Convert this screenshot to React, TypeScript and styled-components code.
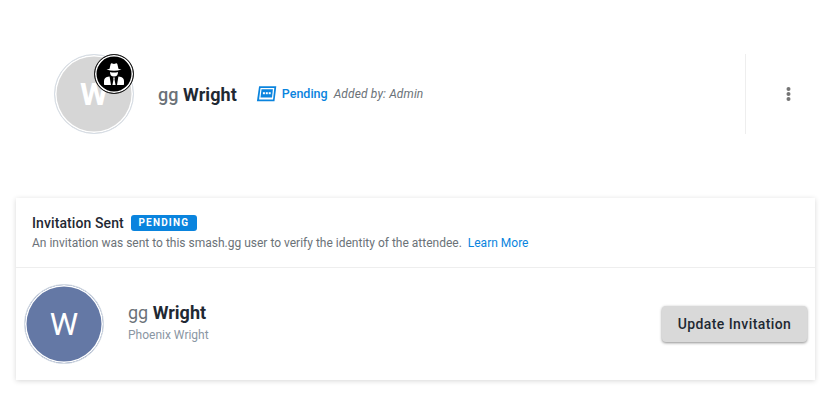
import React from "react";
import styled, { createGlobalStyle } from "styled-components";

const Global = createGlobalStyle`
  html, body { margin: 0; padding: 0; background: #fff; }
  body { font-family: Roboto, "Liberation Sans", sans-serif; color: #1f2933; }
`;

const Page = styled.div`
  width: 834px;
  height: 401px;
  padding: 54px 19px 0 16px;
  box-sizing: border-box;
  overflow: hidden;
`;

const Header = styled.header`
  height: 80px;
  display: flex;
  align-items: center;
  padding-left: 38px;
`;

const Avatar = styled.div<{ $bg: string; $weight: number }>`
  position: relative;
  width: 80px;
  height: 80px;
  flex: none;
  box-sizing: border-box;
  border-radius: 50%;
  border: 1px solid #d6dde5;
  box-shadow: inset 0 0 0 1.5px #fff;
  background: ${(p) => p.$bg};
  color: #fff;
  font-size: 32px;
  font-weight: ${(p) => p.$weight};
  display: flex;
  align-items: center;
  justify-content: center;
`;

const BadgeRing = styled.div`
  position: absolute;
  top: -1px;
  right: -1px;
  width: 40px;
  height: 40px;
  box-sizing: border-box;
  border-radius: 50%;
  background: #000;
  border: 1px solid #1a1a1a;
  box-shadow: inset 0 0 0 1.5px #fff;
  display: flex;
  align-items: center;
  justify-content: center;
`;

const Identity = styled.div`
  margin-left: 24px;
  font-size: 18px;
  line-height: 24px;
  font-weight: 500;
  letter-spacing: 0.06px;
  color: #6b7278;
  white-space: nowrap;
  position: relative;
  top: 1px;
`;

const Strong = styled.strong`
  font-weight: 700;
  color: #1f2933;
`;

const Status = styled.div`
  display: flex;
  align-items: center;
  margin-left: 19px;
  white-space: nowrap;
  font-size: 12px;
  line-height: 16px;
`;

const PendingLabel = styled.span`
  color: #0a84de;
  font-weight: 500;
  font-size: 12.5px;
  margin-left: 5px;
`;

const AddedBy = styled.span`
  color: #6b7278;
  font-style: italic;
  letter-spacing: 0.13px;
  margin-left: 6px;
`;

const Spacer = styled.div`
  flex: 1;
`;

const MenuCell = styled.div`
  width: 70px;
  height: 80px;
  flex: none;
  box-sizing: border-box;
  border-left: 1px solid #eeeeee;
  display: flex;
  align-items: center;
  padding-left: 40px;
`;

const Card = styled.section`
  margin-top: 64px;
  width: 799px;
  height: 182px;
  box-sizing: border-box;
  background: #fff;
  box-shadow: 0 1px 5px rgba(0, 0, 0, 0.16);
`;

const Notice = styled.div`
  height: 70px;
  box-sizing: border-box;
  padding: 16px 16px 0;
  border-bottom: 1px solid #eeeeee;
`;

const TitleRow = styled.div`
  display: flex;
  align-items: center;
  height: 18px;
`;

const Title = styled.h3`
  margin: 0;
  font-size: 14px;
  line-height: 18px;
  font-weight: 500;
  letter-spacing: 0.1px;
  color: #1f2933;
`;

const Tag = styled.span`
  margin-left: 7px;
  height: 16px;
  width: 66px;
  box-sizing: border-box;
  border-radius: 3px;
  background: #0a84de;
  color: #fff;
  font-size: 10px;
  line-height: 15px;
  font-weight: 700;
  letter-spacing: 1.2px;
  text-align: center;
`;

const Message = styled.p`
  margin: 3px 0 0;
  font-size: 12px;
  line-height: 16px;
  color: #6b7278;
  white-space: nowrap;
`;

const Learn = styled.a`
  color: #0a84de;
  margin-left: 6px;
`;

const PersonRow = styled.div`
  height: 111px;
  display: flex;
  align-items: center;
  padding: 0 8px;
`;

const PersonText = styled.div`
  margin-left: 24px;
  position: relative;
  top: -2px;
`;

const PersonName = styled.div`
  font-size: 18px;
  line-height: 24px;
  color: #6b7278;
`;

const PersonSub = styled.div`
  font-size: 12px;
  line-height: 16px;
  margin-top: 2px;
  color: #8a96a3;
`;

const UpdateButton = styled.button`
  width: 145px;
  height: 36px;
  padding: 0;
  border: 0;
  border-radius: 4px;
  background: #d9d9d9;
  color: #1f2933;
  font-family: inherit;
  font-size: 14px;
  font-weight: 500;
  letter-spacing: 0.42px;
  box-shadow: 0 1px 3px rgba(0, 0, 0, 0.45);
`;

const SpyIcon = () => (
  <svg width="22" height="24" viewBox="0 0 22 24">
    <path d="M6.5 7 L7.6 2.2 Q8 1 9.4 1.5 L11 2 L12.6 1.5 Q14 1 14.4 2.2 L15.5 7 Z" fill="#fff" />
    <path d="M3.5 7.6 Q11 5.4 18.5 7.6 Q11 10 3.5 7.6 Z" fill="#fff" />
    <path d="M7 10 Q11 11.2 15 10 Q15 14.5 11 14.5 Q7 14.5 7 10 Z" fill="#fff" />
    <path d="M6.6 14.4 L8 23 H1.5 Q1 23 1 22 V19 Q1 15.5 5 14.8 Z" fill="#fff" />
    <path d="M15.4 14.4 L14 23 H20.5 Q21 23 21 22 V19 Q21 15.5 17 14.8 Z" fill="#fff" />
    <path d="M10.2 15.5 H11.8 L11.5 17.5 L12.6 23 H9.4 L10.5 17.5 Z" fill="#fff" />
  </svg>
);

const PendingIcon = () => (
  <svg width="21" height="16" viewBox="0 0 20 16">
    <path d="M2.6 0.3H19.8L18 15.3H0.4Z" fill="#0a84de" />
    <path d="M4 2H17.8L16.5 13.4H2.6Z" fill="#fff" />
    <path d="M5 3.2H16.4L15.5 11.4H4Z" fill="#0a84de" />
    <rect x="6.4" y="6.2" width="2" height="2" fill="#fff" />
    <rect x="9.3" y="6.2" width="2" height="2" fill="#fff" />
    <rect x="12.2" y="6.2" width="2" height="2" fill="#fff" />
  </svg>
);

const DotsIcon = () => (
  <svg width="5" height="14" viewBox="0 0 5 14">
    <circle cx="2.5" cy="2" r="2" fill="#757575" />
    <circle cx="2.5" cy="7" r="2" fill="#757575" />
    <circle cx="2.5" cy="12" r="2" fill="#757575" />
  </svg>
);

export default function App() {
  return (
    <Page>
      <Global />
      <Header>
        <Avatar $bg="#d6d6d6" $weight={700}>
          W
          <BadgeRing>
            <SpyIcon />
          </BadgeRing>
        </Avatar>
        <Identity>
          gg <Strong>Wright</Strong>
        </Identity>
        <Status>
          <PendingIcon />
          <PendingLabel>Pending</PendingLabel>
          <AddedBy>Added by: Admin</AddedBy>
        </Status>
        <Spacer />
        <MenuCell>
          <DotsIcon />
        </MenuCell>
      </Header>
      <Card>
        <Notice>
          <TitleRow>
            <Title>Invitation Sent</Title>
            <Tag>PENDING</Tag>
          </TitleRow>
          <Message>
            An invitation was sent to this smash.gg user to verify the identity of the attendee.
            <Learn>Learn More</Learn>
          </Message>
        </Notice>
        <PersonRow>
          <Avatar $bg="#6478a5" $weight={400}>W</Avatar>
          <PersonText>
            <PersonName>
              gg <Strong>Wright</Strong>
            </PersonName>
            <PersonSub>Phoenix Wright</PersonSub>
          </PersonText>
          <Spacer />
          <UpdateButton>Update Invitation</UpdateButton>
        </PersonRow>
      </Card>
    </Page>
  );
}
